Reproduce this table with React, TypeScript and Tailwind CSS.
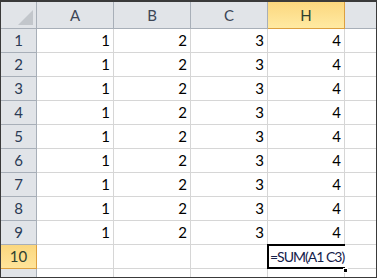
const cols = ["A", "B", "C", "H"]
const rows = [1, 2, 3, 4, 5, 6, 7, 8, 9]

function Corner() {
  return (
    <div className="w-[36px] h-[27px] shrink-0 bg-[#e1e4e8] border-r border-b border-[#a8afb8] relative">
      <svg className="absolute right-[3px] bottom-[3px]" width="15" height="15" viewBox="0 0 15 15">
        <polygon points="15,0 15,15 0,15" fill="#c2c6cb" />
      </svg>
    </div>
  )
}

export default function App() {
  return (
    <div
      className="w-[377px] h-[278px] border border-[#3a3a3a] border-t-2 overflow-hidden bg-white text-[15px] text-black"
      style={{ fontFamily: "Lato, 'Open Sans', sans-serif" }}
    >
      {/* header row */}
      <div className="flex">
        <Corner />
        {cols.map((c) => (
          <div
            key={c}
            className={`w-[77px] h-[27px] shrink-0 flex items-center justify-center border-r border-b ${
              c === "H"
                ? "bg-gradient-to-b from-[#fbd77e] to-[#ffeaa2] border-[#dca040] text-[#2f3f2f]"
                : "bg-[#e1e4e8] border-[#a8afb8] text-[#3c4656]"
            }`}
          >
            {c}
          </div>
        ))}
        <div className="flex-1 h-[27px] bg-[#e1e4e8] border-b border-[#a8afb8]" />
      </div>

      {rows.map((r) => (
        <div key={r} className="flex">
          <div className="w-[36px] h-[24px] shrink-0 flex items-center justify-center bg-[#e1e4e8] border-r border-b border-[#a8afb8] text-[#2b3b55]">
            {r}
          </div>
          {[1, 2, 3, 4].map((v) => (
            <div
              key={v}
              className="w-[77px] h-[24px] shrink-0 flex items-center justify-end pr-[3px] border-r border-b border-[#d6d6d6]"
            >
              {v}
            </div>
          ))}
          <div className="flex-1 h-[24px] border-b border-[#d6d6d6]" />
        </div>
      ))}

      {/* row 10 with formula being typed */}
      <div className="flex">
        <div className="w-[36px] h-[24px] shrink-0 flex items-center justify-center bg-gradient-to-b from-[#fbd77e] to-[#ffe49a] border-r border-b border-[#dca040] text-[#2f3f2f]">
          10
        </div>
        <div className="w-[77px] h-[24px] shrink-0 border-r border-b border-[#d6d6d6]" />
        <div className="w-[77px] h-[24px] shrink-0 border-r border-b border-[#d6d6d6]" />
        <div className="w-[77px] h-[24px] shrink-0 border-r border-b border-[#d6d6d6]" />
        <div className="w-[77px] h-[24px] shrink-0 relative">
          <div className="absolute left-[-1px] top-[-1px] h-[25px] w-[78px] border-2 border-r-0 border-black bg-white flex items-center pl-[1px] whitespace-nowrap text-[14px] tracking-[-1px] text-[#14204a]">
            <span>=SUM(A1 C3)</span>
          </div>
          <div className="absolute right-[-3px] bottom-[-4px] w-[5px] h-[5px] bg-black border border-white" />
        </div>
        <div className="flex-1 h-[24px] border-b border-[#d6d6d6]" />
      </div>

      {/* partial row 11 */}
      <div className="flex">
        <div className="w-[36px] h-[24px] shrink-0 flex items-start pt-[3px] justify-center bg-[#e1e4e8] border-r border-[#a8afb8] text-[#2b3b55]">
          11
        </div>
        <div className="w-[77px] h-[24px] shrink-0 border-r border-[#d6d6d6]" />
        <div className="w-[77px] h-[24px] shrink-0 border-r border-[#d6d6d6]" />
        <div className="w-[77px] h-[24px] shrink-0 border-r border-[#d6d6d6]" />
        <div className="w-[77px] h-[24px] shrink-0 border-r border-[#d6d6d6]" />
      </div>
    </div>
  )
}
